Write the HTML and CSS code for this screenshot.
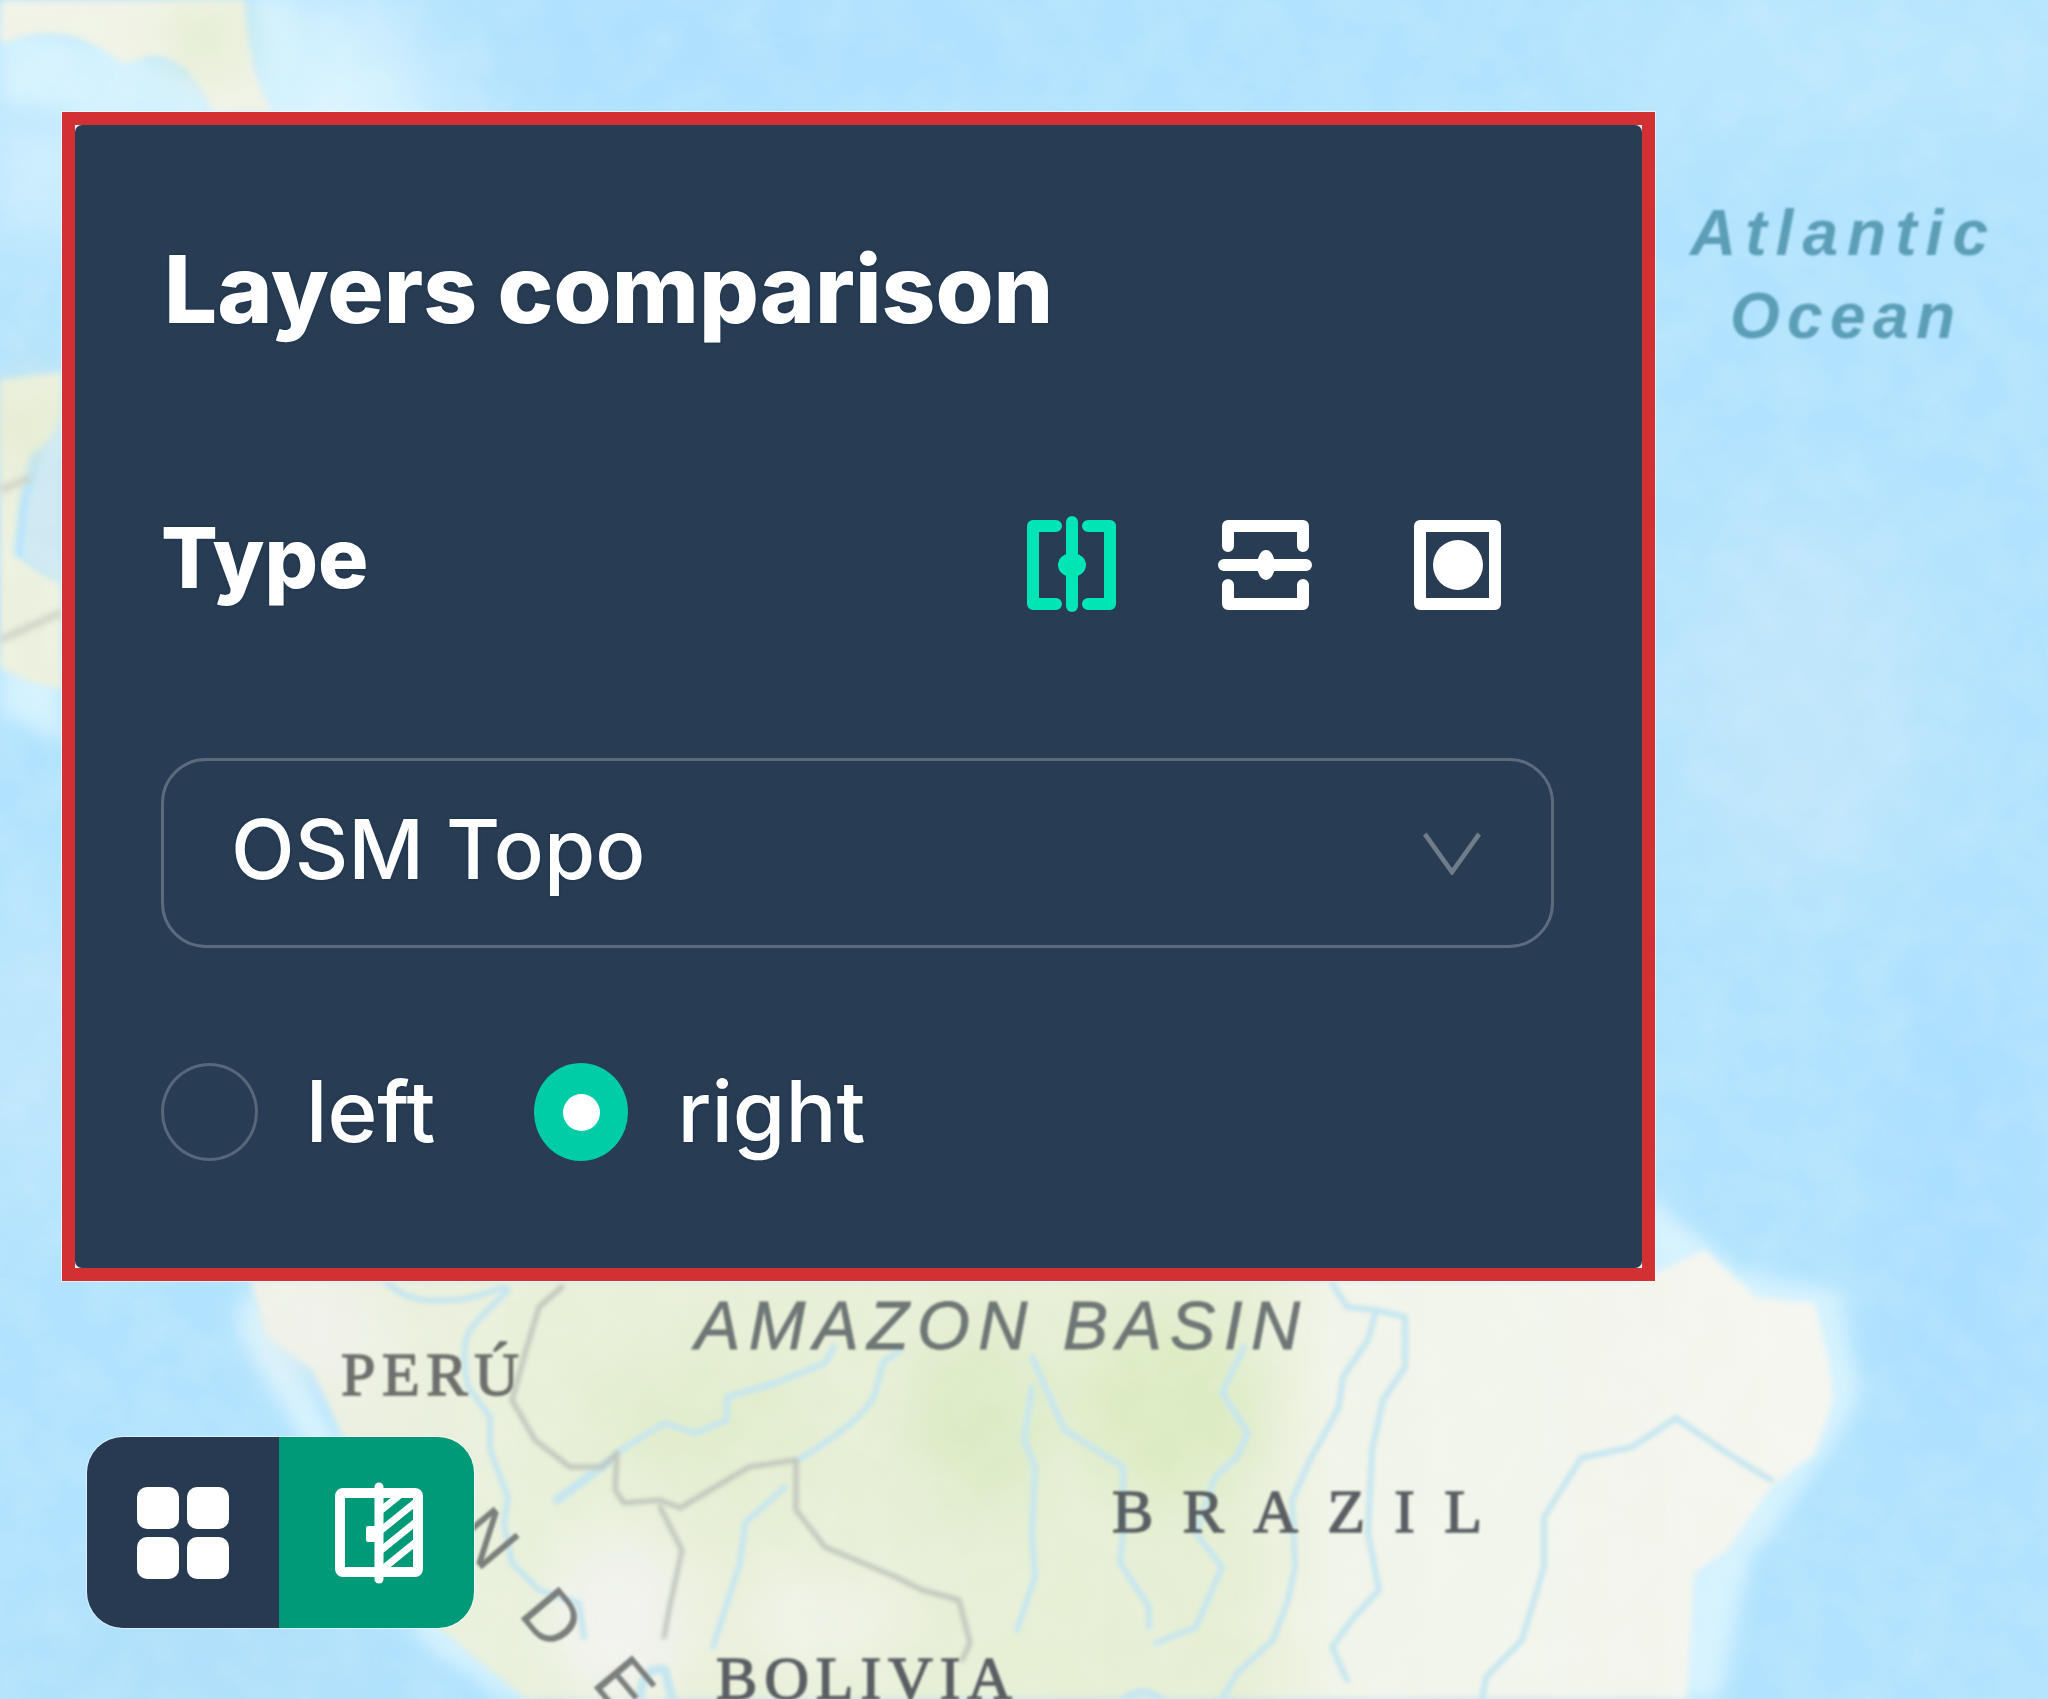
FILE: index.html
```html
<!DOCTYPE html>
<html lang="en">
<head>
<meta charset="utf-8">
<title>Layers comparison</title>
<link rel="stylesheet" href="styles.css">
</head>
<body>
<div class="stage">
  <svg class="map" viewBox="0 0 2048 1699" width="2048" height="1699" aria-hidden="true">
    <defs>
      <filter id="b60" x="-30%" y="-30%" width="160%" height="160%"><feGaussianBlur stdDeviation="50"/></filter>
      <filter id="b30" x="-30%" y="-30%" width="160%" height="160%"><feGaussianBlur stdDeviation="28"/></filter>
      <filter id="b12" x="-10%" y="-10%" width="120%" height="120%"><feGaussianBlur stdDeviation="9"/></filter>
      <filter id="b4" x="-5%" y="-5%" width="110%" height="110%"><feGaussianBlur stdDeviation="3"/></filter>
      <filter id="b2" x="-5%" y="-5%" width="110%" height="110%"><feGaussianBlur stdDeviation="1.9"/></filter>
      <filter id="bt" x="-5%" y="-20%" width="110%" height="140%"><feGaussianBlur stdDeviation="1.2"/></filter>
      <filter id="mottle" x="0" y="0" width="100%" height="100%">
        <feTurbulence type="fractalNoise" baseFrequency=".022" numOctaves="4" seed="7"/>
        <feColorMatrix type="matrix" values="0 0 0 0 1  0 0 0 0 1  0 0 0 0 1  1.6 0 0 0 -.62"/>
      </filter>
      <linearGradient id="landGrad" gradientUnits="userSpaceOnUse" x1="250" x2="1840" y1="0" y2="0">
        <stop offset="0" stop-color="#eef1e6"/>
        <stop offset=".18" stop-color="#e8f0d9"/>
        <stop offset=".62" stop-color="#e6efd4"/>
        <stop offset=".68" stop-color="#f1f4e8"/>
        <stop offset="1" stop-color="#f5f6f0"/>
      </linearGradient>
    </defs>
    <rect width="2048" height="1699" fill="#b2e3fe"/>
    <g filter="url(#b60)">
      <ellipse cx="330" cy="110" rx="120" ry="110" fill="#dbf5fe"/>
      <ellipse cx="50" cy="170" rx="70" ry="60" fill="#dcf4fd"/>
      <ellipse cx="60" cy="340" rx="60" ry="60" fill="#b9e4fa"/>
      <ellipse cx="720" cy="40" rx="340" ry="50" fill="#aee0fe"/>
      <ellipse cx="1850" cy="60" rx="260" ry="50" fill="#c0e9fe"/>
      <ellipse cx="1800" cy="700" rx="130" ry="200" fill="#bfe6fb"/>
      <ellipse cx="1960" cy="1200" rx="60" ry="280" fill="#a9deff"/>
      <ellipse cx="40" cy="1050" rx="70" ry="160" fill="#bfe7fc"/>
      <ellipse cx="220" cy="1660" rx="200" ry="50" fill="#afdff9"/>
    </g>
    <g filter="url(#b12)" fill="#d4f2fe">
      <path d="M1640 1190 L1740 1270 L1840 1290 L1860 1400 L1810 1480 L1750 1560 L1720 1699 L1670 1699 L1670 1560 L1640 1300Z"/>
      <path d="M0 25 L120 45 L200 80 L225 120 L100 120 L0 100Z"/>
      <path d="M250 0 L275 60 L295 115 L320 115 L290 0Z"/>
      <path d="M245 1280 L290 1360 L340 1440 L460 1640 L540 1699 L505 1699 L420 1640 L300 1440 L240 1330Z"/>
      <path d="M0 660 L62 680 L62 740 L0 715Z"/>
    </g>
    <g filter="url(#b4)">
      <path fill="#f0f3e6" d="M0 0 H245 C246 30 250 60 258 82 L272 112 H212 C208 100 200 88 190 74 C180 62 165 55 150 56 C140 58 132 64 122 63 C105 50 92 43 70 36 C45 32 25 34 0 44Z"/>
      <path fill="#ecf1df" d="M0 380 L62 372 V430 L30 455 L20 500 L14 555 L62 580 V690 L30 682 L0 668Z"/>
      <path fill="url(#landGrad)" d="M250 1280 H1640 L1705 1250 L1756 1297 L1815 1303 L1830 1367 L1833 1400 L1815 1453 L1771 1487 L1727 1550 L1694 1573 L1687 1699 H526 L490 1670 L441 1630 L400 1560 L338 1427 L312 1370 L267 1337Z"/>
    </g>
    <g filter="url(#b30)">
      <ellipse cx="205" cy="40" rx="35" ry="30" fill="#dfebc8"/>
      <ellipse cx="30" cy="430" rx="30" ry="45" fill="#e3ebcd"/>
      <ellipse cx="980" cy="1420" rx="70" ry="90" fill="#dcebc6"/>
      <ellipse cx="1170" cy="1410" rx="90" ry="90" fill="#dcebc3"/>
      <ellipse cx="700" cy="1420" rx="120" ry="70" fill="#e2edcd"/>
      <ellipse cx="820" cy="1620" rx="90" ry="50" fill="#f0f3e7"/>
      <ellipse cx="620" cy="1620" rx="70" ry="90" fill="#f2f3ee"/>
      <ellipse cx="320" cy="1330" rx="50" ry="40" fill="#f2f3ed"/>
    </g>
    <path filter="url(#b4)" fill="#cfe9f2" d="M62 410 C50 445 34 472 26 510 L22 556 C32 570 50 580 62 585Z"/>
    <path filter="url(#b4)" fill="none" stroke="#cfd3c8" stroke-width="7" d="M0 490 L30 478 M0 640 L62 612"/>
    <rect width="2048" height="1699" filter="url(#mottle)" opacity=".14"/>
    <g filter="url(#b2)" fill="none" stroke="#c6e6f0" stroke-width="6" stroke-linejoin="round" stroke-linecap="round">
      <path d="M387 1283 C405 1300 430 1302 441 1300 C465 1302 490 1292 504 1287"/>
      <path d="M508 1290 C490 1310 475 1320 468 1333 C462 1350 465 1375 468 1387 L490 1417 L490 1450 L508 1497 L504 1523 L512 1563 L539 1590 L579 1603 L584 1637"/>
      <path d="M617 1453 L664 1423 L695 1433 L727 1420 L727 1397 L776 1383 L825 1363 L834 1347"/>
      <path d="M611 1460 L557 1500" stroke-width="9"/>
      <path d="M798 1460 C830 1440 860 1420 874 1397 L883 1363 L900 1350"/>
      <path d="M785 1487 L745 1523 L740 1563 L713 1647"/>
      <path d="M1332 1283 L1347 1307 L1376 1310 L1368 1340 L1343 1377 L1339 1407 L1310 1460 L1292 1500 L1295 1567 L1288 1600 L1273 1640 L1237 1673 L1222 1699"/>
      <path d="M1376 1310 L1405 1317 L1405 1367 L1383 1400 L1372 1450 L1368 1533 L1379 1590 L1354 1617 L1332 1647 L1347 1680"/>
      <path d="M1032 1357 L1054 1407 L1065 1430 L1112 1460 L1123 1467 L1123 1533 L1120 1563 L1149 1607 L1149 1627"/>
      <path d="M1032 1387 L1024 1440 L1035 1467 L1032 1533 L1035 1577 L1017 1630"/>
      <path d="M1244 1347 L1222 1393 L1248 1433 L1237 1457 L1215 1477 L1196 1533 L1222 1567 L1196 1627 L1156 1643"/>
      <path d="M1676 1418 L1632 1447 L1581 1458 L1544 1517 L1544 1567 L1522 1640 L1486 1677 L1482 1699"/>
      <path d="M1676 1418 L1727 1453 L1771 1480"/>
      <path d="M640 1699 C640 1680 650 1665 665 1670 L672 1699" stroke-width="9"/>
      <path d="M1125 1699 C1135 1690 1150 1690 1160 1699" stroke-width="8"/>
    </g>
    <g filter="url(#b2)" fill="none" stroke="#c0c6bd" stroke-width="5" stroke-linejoin="round" stroke-linecap="round">
      <path d="M562 1287 L539 1307 L526 1350 L512 1400 L535 1440 L570 1467 L602 1467 L617 1453 L615 1490 L624 1503 L660 1500 L680 1508 L749 1467 L796 1460 L796 1510 L825 1547 L896 1577 L922 1590 L959 1600 L970 1643 L962 1660"/>
      <path d="M660 1507 L682 1550 L669 1610 L664 1637"/>
    </g>
    <g class="map-text" filter="url(#bt)">
      <text class="label ocean" x="1690" y="255" textLength="298">Atlantic</text>
      <text class="label ocean" x="1730" y="338" textLength="225">Ocean</text>
      <text class="label basin" x="695" y="1349" textLength="605">AMAZON BASIN</text>
      <text class="label country peru" x="341" y="1395" textLength="178">PERÚ</text>
      <text class="label country" x="1112" y="1532" textLength="370">BRAZIL</text>
      <text class="label country" x="716" y="1699" textLength="296">BOLIVIA</text>
      <text class="label range" transform="translate(452 1534) rotate(50)">N</text>
      <text class="label range" transform="translate(517 1614) rotate(50)">D</text>
      <text class="label range" transform="translate(590 1683) rotate(50)">E</text>
    </g>
  </svg>

  <section class="frame">
    <div class="panel">
      <h1 class="title">Layers comparison</h1>
      <div class="type-row">
        <span class="type-label">Type</span>
        <div class="type-icons">
          <svg class="icon" viewBox="0 0 100 100" aria-label="Vertical swipe">
            <g class="stroke-green">
              <path d="M34 12 H11 V90 H34"/>
              <path d="M66 12 H88 V90 H66"/>
              <path d="M50 8 V92"/>
            </g>
            <ellipse class="fill-green" cx="50" cy="51" rx="14" ry="12"/>
          </svg>
          <svg class="icon" viewBox="0 0 100 100" aria-label="Horizontal swipe">
            <g class="stroke-white">
              <path d="M13 32 V12 H88 V32"/>
              <path d="M13 71 V90 H88 V71"/>
              <path d="M9 51 H91"/>
            </g>
            <ellipse class="fill-white" cx="51" cy="51" rx="9" ry="15"/>
          </svg>
          <svg class="icon" viewBox="0 0 100 100" aria-label="Spotlight">
            <rect class="stroke-white" x="12" y="12" width="75" height="78"/>
            <circle class="fill-white" cx="50" cy="51" r="25"/>
          </svg>
        </div>
      </div>
      <div class="select">
        <span class="select-value">OSM Topo</span>
        <svg class="chevron" viewBox="0 0 64 44" preserveAspectRatio="none" aria-hidden="true"><path d="M2 2 L32 41 L62 2"/></svg>
      </div>
      <div class="radios">
        <label class="radio-item">
          <span class="radio"></span>
          <span class="radio-text">left</span>
        </label>
        <label class="radio-item radio-item-right">
          <span class="radio radio-on"><span class="radio-dot"></span></span>
          <span class="radio-text">right</span>
        </label>
      </div>
    </div>
  </section>

  <div class="switcher">
    <div class="switch-cell switch-left">
      <svg class="grid-icon" viewBox="0 0 92 92" aria-label="Layers">
        <rect x="0" y="0" width="42" height="42" rx="10"/>
        <rect x="50" y="0" width="42" height="42" rx="10"/>
        <rect x="0" y="50" width="42" height="42" rx="10"/>
        <rect x="50" y="50" width="42" height="42" rx="10"/>
      </svg>
    </div>
    <div class="switch-cell switch-right">
      <svg class="split-icon" viewBox="0 0 100 110" aria-label="Compare">
        <defs><clipPath id="hatch"><rect x="52" y="15" width="34" height="78"/></clipPath></defs>
        <rect class="split-frame" x="11" y="15" width="78" height="79" rx="3"/>
        <g clip-path="url(#hatch)" class="split-hatch">
          <path d="M45 38 L92 0 M45 58 L92 20 M45 78 L92 40 M45 98 L92 60"/>
        </g>
        <path class="split-bar" d="M50 9 V101"/>
        <rect class="split-knob" x="37" y="48" width="14" height="16" rx="2"/>
      </svg>
    </div>
  </div>
</div>
</body>
</html>
```

FILE: styles.css
```css
* { box-sizing: border-box; }
html, body { margin: 0; padding: 0; }
body { font-family: Inter, "Noto Sans", "Liberation Sans", sans-serif; background: #b2e3fe; }

.stage { position: relative; width: 2048px; height: 1699px; overflow: hidden; }
.map { position: absolute; left: 0; top: 0; display: block; }

.label { font-family: "Liberation Sans", sans-serif; }
.ocean { font-size: 64px; font-weight: 700; font-style: italic; fill: #5b9eb6; }
.basin { font-size: 68px; font-style: italic; fill: #6e7776; stroke: #6e7776; stroke-width: .8; }
.country { font-family: "Liberation Serif", serif; font-size: 62px; fill: #5a5f64; stroke: #5a5f64; stroke-width: 1.4; }
.peru { fill: #6d706c; stroke: #6d706c; }
.range { font-size: 72px; fill: #7b807d; }

.frame {
  position: absolute; left: 62px; top: 112px; width: 1593px; height: 1169px;
  border: 13px solid #d33033; background: #e6f1f6;
  box-shadow: 0 0 0 1px rgba(255, 255, 255, .55);
}
.panel {
  height: 100%; padding: 102px 88px 0 86px;
  background: #283c53; border-radius: 7px; color: #fff;
}
.title {
  margin: 0 0 0 3px; font-size: 94px; line-height: 124px; font-weight: 800;
  text-shadow: 0 0 3px #16304c; filter: blur(.5px);
}
.type-row { display: flex; justify-content: space-between; align-items: center; margin-top: 163px; padding-right: 46px; }
.type-label { padding-bottom: 12px; font-size: 84px; line-height: 88px; font-weight: 800; text-shadow: 0 0 3px #16304c; filter: blur(.5px); }
.type-icons { display: flex; gap: 93px; }
.icon { display: block; width: 100px; height: 100px; filter: blur(.5px); }
.stroke-green, .stroke-white { fill: none; stroke-width: 12; stroke-linecap: round; stroke-linejoin: round; }
.stroke-green { stroke: #00e5b4; }
.stroke-white { stroke: #fff; }
.fill-green { fill: #00e5b4; }
.fill-white { fill: #fff; }

.select {
  display: flex; align-items: center; justify-content: space-between;
  height: 190px; margin-top: 144px; padding: 0 70px 0 67px;
  border: 3px solid #5b6b7c; border-radius: 45px;
}
.select-value { padding-bottom: 8px; font-size: 83px; line-height: 100px; font-weight: 500; text-shadow: 0 0 3px #16304c; filter: blur(.5px); }
.chevron { display: block; width: 58px; height: 43px; fill: none; stroke: #6f7c89; stroke-width: 5; }

.radios { display: flex; align-items: center; margin-top: 115px; }
.radio-item { display: flex; align-items: center; gap: 48px; }
.radio-item-right { margin-left: 99px; gap: 49px; }
.radio { display: flex; align-items: center; justify-content: center; width: 97px; height: 98px; border: 3px solid #566779; border-radius: 50%; }
.radio-on { width: 94px; border: 0; background: #00cca5; }
.radio-dot { width: 37px; height: 37px; border-radius: 50%; background: #fff; }
.radio-text { font-size: 85px; line-height: 98px; font-weight: 500; text-shadow: 0 0 3px #16304c; filter: blur(.5px); }

.switcher {
  position: absolute; left: 87px; top: 1437px; width: 387px; height: 191px;
  display: flex; border-radius: 36px; overflow: hidden;
  box-shadow: 0 0 0 1px rgba(255, 255, 255, .5);
}
.switch-cell { display: flex; align-items: center; justify-content: center; }
.switch-left { width: 192px; background: #283a52; }
.switch-right { flex: 1; background: #019a78; padding-left: 5px; }
.grid-icon { display: block; width: 92px; height: 92px; fill: #fff; }
.split-icon { display: block; width: 100px; height: 110px; }
.split-frame { fill: none; stroke: #fff; stroke-width: 10; }
.split-hatch { fill: none; stroke: #fff; stroke-width: 7; }
.split-bar { fill: none; stroke: #fff; stroke-width: 9; stroke-linecap: round; }
.split-knob { fill: #fff; }
```
